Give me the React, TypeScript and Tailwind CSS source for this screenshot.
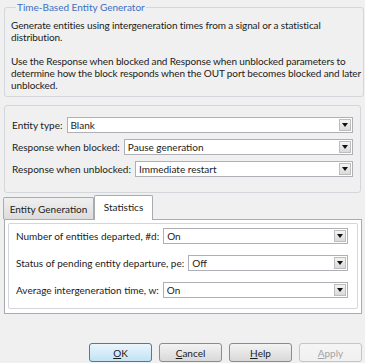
import type { ReactNode } from "react";

function Combo({ value }: { value: string }) {
  return (
    <div className="flex-1 h-[16px] flex items-center bg-white border border-[#aeb0b6] pl-[3px] pr-[1px]">
      <span className="flex-1 leading-none text-[#1b1b1b]">{value}</span>
      <div className="w-[12px] h-[12px] flex items-center justify-center border border-[#bdbdbd] bg-gradient-to-b from-[#f4f4f4] to-[#dadada]">
        <svg viewBox="0 0 6 4" className="w-[6px] h-[4px]">
          <path d="M0 0H6L3 4Z" fill="#111" />
        </svg>
      </div>
    </div>
  );
}

function Row({ label, value }: { label: string; value: string }) {
  return (
    <div className="flex items-center gap-[4px]">
      <span className="whitespace-nowrap text-[#1b1b1b]">{label}</span>
      <Combo value={value} />
    </div>
  );
}

function Btn({
  children,
  primary,
  disabled,
}: {
  children: ReactNode;
  primary?: boolean;
  disabled?: boolean;
}) {
  const look = primary
    ? "border-[#3c7fb1] from-[#eaf6fd] to-[#c2e2f4] text-[#1b1b1b]"
    : disabled
      ? "border-[#c3c6c9] from-[#f5f5f5] to-[#f0f0f0] text-[#a3a3a3]"
      : "border-[#8c8c8c] from-[#f3f3f3] to-[#d9d9d9] text-[#1b1b1b]";
  return (
    <button
      className={`w-[63px] h-[19px] rounded-[3px] border bg-gradient-to-b flex items-center justify-center leading-none ${look}`}
    >
      {children}
    </button>
  );
}

export default function App() {
  return (
    <div
      className="w-[365px] h-[363px] bg-[#f0f0f0] text-[10px] overflow-hidden pt-[1px]"
      style={{ fontFamily: "Lato, 'Liberation Sans', sans-serif" }}
    >
      {/* Description group */}
      <fieldset className="mx-[4px] border border-[#d3d6da] rounded-[3px] pl-[6px] pr-[2px] pb-[5px]">
        <legend className="ml-[5px] px-[1px] text-[#3d6fc0] leading-[12px]">
          Time-Based Entity Generator
        </legend>
        <div className="pt-[6px] leading-[12px] text-[#1b1b1b] whitespace-nowrap tracking-[-0.12px]">
          <p>
            Generate entities using intergeneration times from a signal or a statistical
            <br />
            distribution.
          </p>
          <p className="mt-[12px]">
            Use the Response when blocked and Response when unblocked parameters to
            <br />
            determine how the block responds when the OUT port becomes blocked and later
            <br />
            unblocked.
          </p>
        </div>
      </fieldset>

      {/* Parameters group */}
      <div className="mx-[4px] mt-[8px] border border-[#d3d6da] rounded-[3px] pl-[7px] pr-[7px] pt-[11px] pb-[15px] flex flex-col gap-[6px]">
        <Row label="Entity type:" value="Blank" />
        <Row label="Response when blocked:" value="Pause generation" />
        <Row label="Response when unblocked:" value="Immediate restart" />
      </div>

      {/* Tabs */}
      <div className="mx-[3px] mt-[1px] flex items-end h-[25px]">
        <div className="w-[91px] h-[22px] border border-[#a8abb2] border-b-0 rounded-t-[2px] bg-gradient-to-b from-[#f0f0f0] to-[#dcdcdc] flex items-center justify-center text-[#1b1b1b] pt-[1px]">
          Entity Generation
        </div>
        <div className="w-[59px] h-[25px] -mb-[1px] relative z-10 border border-[#a8abb2] border-b-0 rounded-t-[2px] bg-white flex items-center justify-center text-[#1b1b1b] pb-[2px]">
          Statistics
        </div>
      </div>
      <div className="mx-[3px] ml-[4px] border border-[#a8abb2] bg-white p-[3px] pb-[4px]">
        <div className="border border-[#d3d6da] rounded-[2px] pl-[7px] pr-[9px] pt-[4px] pb-[10px] flex flex-col gap-[11px]">
          <Row label="Number of entities departed, #d:" value="On" />
          <Row label="Status of pending entity departure, pe:" value="Off" />
          <Row label="Average intergeneration time, w:" value="On" />
        </div>
      </div>

      {/* Buttons */}
      <div className="flex justify-end gap-[7px] pr-[3px] mt-[29px]">
        <Btn primary>
          <span className="underline">O</span>K
        </Btn>
        <Btn>
          <span className="underline">C</span>ancel
        </Btn>
        <Btn>
          <span className="underline">H</span>elp
        </Btn>
        <Btn disabled>
          <span className="underline">A</span>pply
        </Btn>
      </div>
    </div>
  );
}
